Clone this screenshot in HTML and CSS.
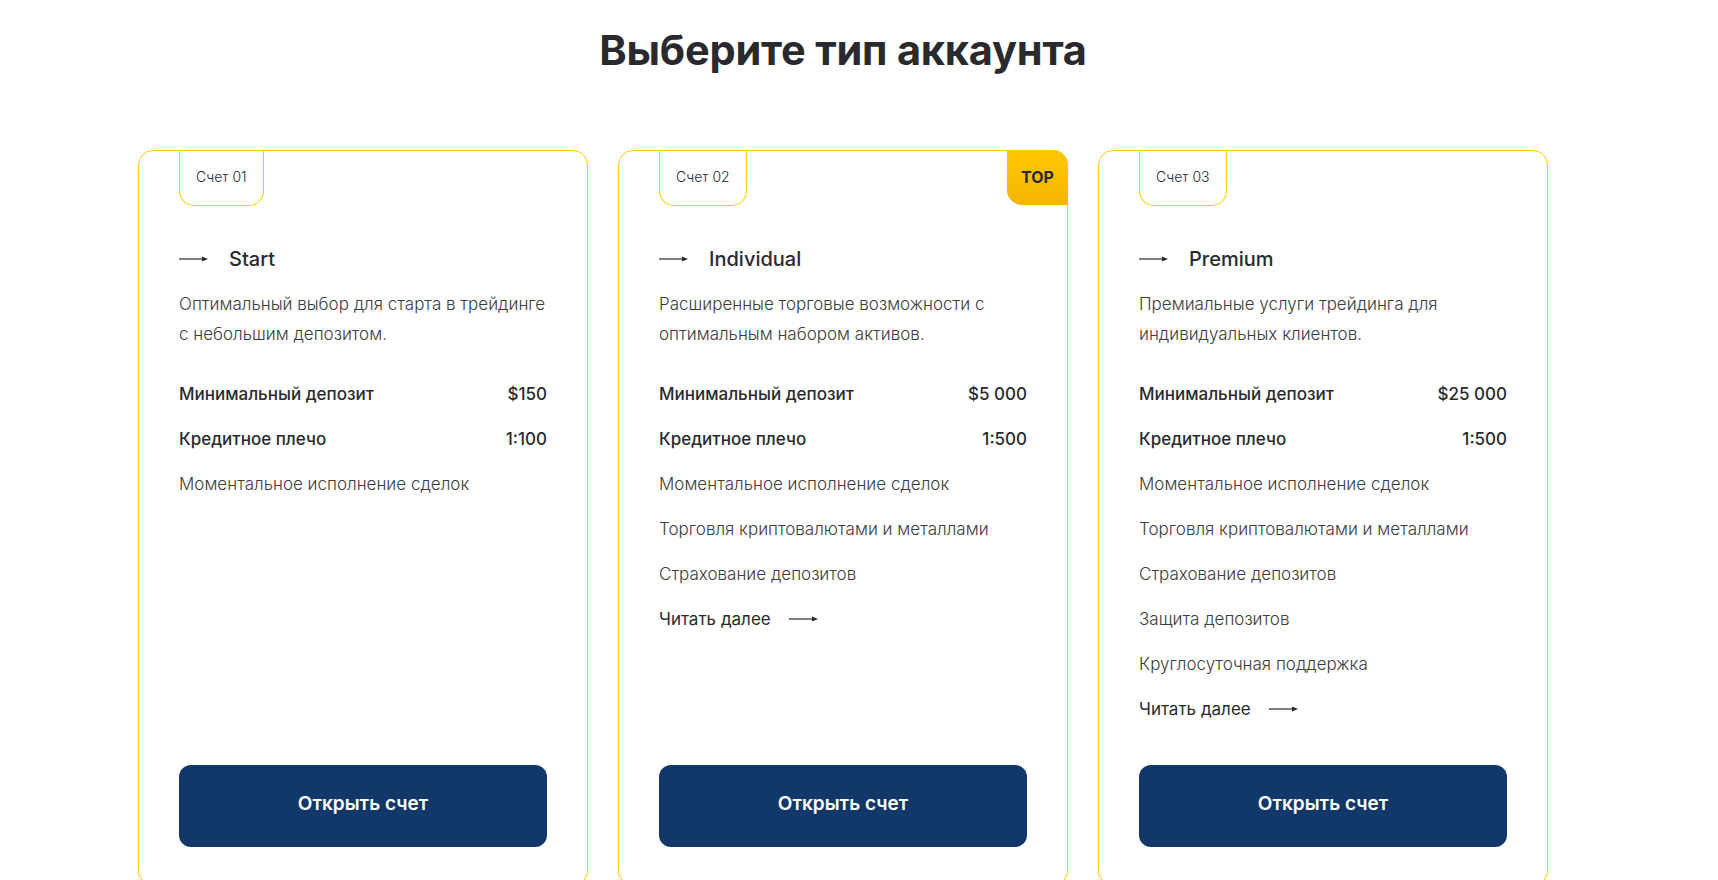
FILE: index.html
```html
<!DOCTYPE html>
<html lang="ru">
<head>
<meta charset="utf-8">
<title>Выберите тип аккаунта</title>
<link rel="stylesheet" href="styles.css">
</head>
<body>
<div class="page">
  <h1 class="title">Выберите тип аккаунта</h1>
  <div class="cards">
    <div class="card">
      <div class="tab">Счет 01</div>
      <div class="head">
        <svg class="arrow" width="29" height="8" viewBox="0 0 29 8"><line x1="0" y1="4" x2="24" y2="4" stroke="#2a2a2e" stroke-width="1.2"/><path d="M23 1.5 L29 4 L23 6.5 Z" fill="#2a2a2e"/></svg>
        <span class="name">Start</span>
      </div>
      <p class="desc">Оптимальный выбор для старта в трейдинге с небольшим депозитом.</p>
      <ul class="list">
        <li class="row strong"><span>Минимальный депозит</span><span>$150</span></li>
        <li class="row strong"><span>Кредитное плечо</span><span>1:100</span></li>
        <li class="row">Моментальное исполнение сделок</li>
      </ul>
      <button class="btn">Открыть счет</button>
    </div>
    <div class="card">
      <div class="tab">Счет 02</div>
      <div class="badge">TOP</div>
      <div class="head">
        <svg class="arrow" width="29" height="8" viewBox="0 0 29 8"><line x1="0" y1="4" x2="24" y2="4" stroke="#2a2a2e" stroke-width="1.2"/><path d="M23 1.5 L29 4 L23 6.5 Z" fill="#2a2a2e"/></svg>
        <span class="name">Individual</span>
      </div>
      <p class="desc">Расширенные торговые возможности с оптимальным набором активов.</p>
      <ul class="list">
        <li class="row strong"><span>Минимальный депозит</span><span>$5 000</span></li>
        <li class="row strong"><span>Кредитное плечо</span><span>1:500</span></li>
        <li class="row">Моментальное исполнение сделок</li>
        <li class="row">Торговля криптовалютами и металлами</li>
        <li class="row">Страхование депозитов</li>
        <li class="row more">Читать далее <svg class="arrow" width="29" height="8" viewBox="0 0 29 8"><line x1="0" y1="4" x2="24" y2="4" stroke="#2a2a2e" stroke-width="1.2"/><path d="M23 1.5 L29 4 L23 6.5 Z" fill="#2a2a2e"/></svg></li>
      </ul>
      <button class="btn">Открыть счет</button>
    </div>
    <div class="card">
      <div class="tab">Счет 03</div>
      <div class="head">
        <svg class="arrow" width="29" height="8" viewBox="0 0 29 8"><line x1="0" y1="4" x2="24" y2="4" stroke="#2a2a2e" stroke-width="1.2"/><path d="M23 1.5 L29 4 L23 6.5 Z" fill="#2a2a2e"/></svg>
        <span class="name">Premium</span>
      </div>
      <p class="desc">Премиальные услуги трейдинга для индивидуальных клиентов.</p>
      <ul class="list">
        <li class="row strong"><span>Минимальный депозит</span><span>$25 000</span></li>
        <li class="row strong"><span>Кредитное плечо</span><span>1:500</span></li>
        <li class="row">Моментальное исполнение сделок</li>
        <li class="row">Торговля криптовалютами и металлами</li>
        <li class="row">Страхование депозитов</li>
        <li class="row">Защита депозитов</li>
        <li class="row">Круглосуточная поддержка</li>
        <li class="row more">Читать далее <svg class="arrow" width="29" height="8" viewBox="0 0 29 8"><line x1="0" y1="4" x2="24" y2="4" stroke="#2a2a2e" stroke-width="1.2"/><path d="M23 1.5 L29 4 L23 6.5 Z" fill="#2a2a2e"/></svg></li>
      </ul>
      <button class="btn">Открыть счет</button>
    </div>
  </div>
</div>
</body>
</html>
```
FILE: styles.css
```css
* { box-sizing: border-box; }
html, body { margin: 0; padding: 0; background: #fff; overflow: hidden; }
body {
  font-family: Inter, "Noto Sans", sans-serif;
  color: #2a2a2e;
}
.page {
  width: 1410px;
  margin-left: 138px;
}
.title {
  margin: 0;
  padding-top: 26px;
  height: 150px;
  text-align: center;
  font-size: 41.5px;
  line-height: 48px;
  font-weight: 700;
  letter-spacing: -0.2px;
  color: #2a2a2e;
}
.cards {
  display: grid;
  grid-template-columns: repeat(3, 450px);
  gap: 30px;
}
.card {
  position: relative;
  height: 736px;
  border: 1px solid #ffcc00;
  border-radius: 15px;
  padding: 0 40px 38px;
  display: flex;
  flex-direction: column;
}
.tab {
  align-self: flex-start;
  height: 55px;
  padding: 0 16px;
  border: 1px solid #ffcc00;
  border-top: none;
  border-radius: 0 0 15px 15px;
  font-size: 14px;
  font-weight: 300;
  line-height: 52px;
  color: #2a2a2e;
}
.badge {
  position: absolute;
  top: -1px;
  right: -1px;
  width: 61px;
  height: 55px;
  border-radius: 0 15px 0 15px;
  background: linear-gradient(180deg, #ffc800 0%, #f6b500 100%);
  font-size: 16px;
  font-weight: 700;
  line-height: 54px;
  text-align: center;
  color: #2a2a2e;
}
.head {
  display: flex;
  align-items: center;
  gap: 21px;
  margin-top: 38px;
  height: 30px;
}
.arrow { display: block; flex: none; }
.name {
  font-size: 20px;
  font-weight: 500;
}
.desc {
  margin: 16px 0 0;
  font-size: 17px;
  line-height: 29.5px;
  font-weight: 300;
  color: #3c3c40;
}
.list {
  list-style: none;
  margin: 22px 0 0;
  padding: 0;
}
.row {
  height: 45px;
  display: flex;
  align-items: center;
  justify-content: space-between;
  font-size: 17px;
  font-weight: 300;
  color: #3c3c40;
}
.row.strong {
  font-weight: 500;
  color: #2a2a2e;
}
.row.more {
  justify-content: flex-start;
  gap: 18px;
  font-weight: 400;
  color: #2a2a2e;
}
.btn {
  margin-top: auto;
  height: 82px;
  width: 100%;
  border: none;
  border-radius: 12px;
  background: #12386a;
  color: #fff;
  font-family: inherit;
  font-size: 19px;
  font-weight: 600;
  padding: 0 0 5px;
}
```
